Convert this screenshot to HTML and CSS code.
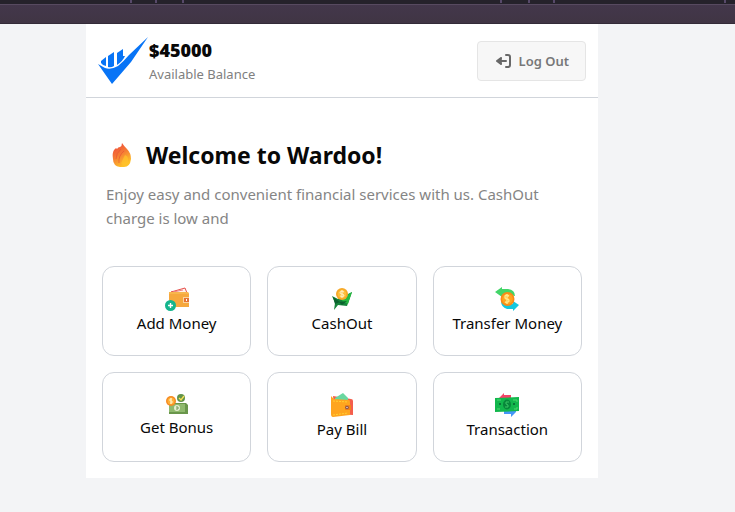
FILE: index.html
```html
<!DOCTYPE html>
<html lang="en">
<head>
<meta charset="utf-8">
<meta name="viewport" content="width=device-width, initial-scale=1">
<title>Wardoo</title>
<link rel="stylesheet" href="styles.css">
</head>
<body>
<div class="topbar" aria-hidden="true">
  <svg class="ticks" width="735" height="4"><path d="M130 0h2v3h-2zM155 0h2v3h-2zM182 0h2v3h-2zM500 0h2v3h-2zM528 0h2v3h-2zM553 0h2v3h-2zM724 0h2v3h-2z" fill="#57496a"/></svg>
</div>
<main class="panel">
  <header class="header">
    <div class="account">
      <svg class="logo" viewBox="0 0 51 48" aria-hidden="true">
        <g fill="#0874f6">
          <path d="M0 27L7 31Q13 33 20 29Q26 24 31 18L50 0L33 25L14 47Z"/>
          <path d="M3 26V24L8 20V29Q5 29 3 26ZM10 30V19L16 15V29Q13 31 10 30ZM19 28V16L25 12V19L27 19Q25 24 19 28Z"/>
        </g>
      </svg>
      <div>
        <div class="amount">$45000</div>
        <div class="caption">Available Balance</div>
      </div>
    </div>
    <button class="logout" type="button">
      <svg width="16" height="14" viewBox="0 0 16 14" fill="none" stroke="#686868" stroke-width="2" stroke-linejoin="round" stroke-linecap="round" aria-hidden="true"><path d="M10 1H12Q14 1 14 3V11Q14 13 12 13H10M10 7H2M5 4L1 7L5 10"/><path d="M5 4L1 7L5 10Z" fill="#686868" stroke-width="1"/></svg>
      Log Out
    </button>
  </header>
  <section class="welcome">
    <h1>
      <svg class="fire" viewBox="0 0 20 24" aria-hidden="true">
        <defs><linearGradient id="flame" x1="0" y1="0" x2=".5" y2="1"><stop stop-color="#ee3f3d"/><stop offset=".5" stop-color="#f47735"/><stop offset="1" stop-color="#ffc229"/></linearGradient></defs>
        <path d="M10 0Q12 3 15 6Q19 10 19 16Q18 24 12 24H8Q1 23 1 16Q0 10 2 7L4 5L5 6Q6 4 8 4Q10 3 10 0Z" fill="url(#flame)"/>
        <path d="M9 6Q4 10 4 16M12 8Q6 13 7 20" fill="none" stroke="#e85335" stroke-width=".7"/>
        <path d="M13 12Q11 16 10 18Q8 22 12 22Q17 21 16 16Q16 13 13 12Z" fill="#ffc52c" opacity=".7"/>
      </svg>
      Welcome to Wardoo!
    </h1>
    <p>Enjoy easy and convenient financial services with us. CashOut charge is low and</p>
  </section>
  <nav class="actions" aria-label="Services">
    <button class="action" type="button">
      <svg width="24" height="24" viewBox="0 0 24 24" aria-hidden="true"><path d="M6 5L20 1L22 6Z" fill="#fff2ed" stroke="#e6504c"/><path d="M8 5L18 3" stroke="#ef8681"/><path d="M4 5H22Q24 5 24 7V20H4Z" fill="#f6a83d"/><path d="M4 5H23V7H4Z" fill="#f8b64d"/><path d="M18 10H24V16H18Z" fill="#fbd3a0"/><path d="M19 11H24V15H19Z" fill="#e57232"/><path d="M21 12H22V14H21Z" fill="#fff"/><circle cx="5.5" cy="18.5" r="5.5" fill="#14b58d"/><path d="M5.5 16V21M3 18.5H8" stroke="#fff" stroke-width="1.4"/></svg>
      Add Money
    </button>
    <button class="action" type="button">
      <svg width="24" height="24" viewBox="0 0 24 24" aria-hidden="true"><path d="M2 9L8 12L22 5L17 19L8 18L4 23L5 16Z" fill="#16843b"/><path d="M14 10L22 5L18 17L12 14Z" fill="#26b941"/><path d="M3 10L10 15L5 17ZM9 15L17 14L12 18Z" fill="#0b632e"/><circle cx="12" cy="7" r="6" fill="#f7a928"/><circle cx="12" cy="7" r="4.3" fill="#ffbf3b"/><path d="M14 5Q10 3 10 6Q10 7 12 7Q14 7 14 9Q13 10 10 9M12 3V11" fill="none" stroke="#fff2ca"/></svg>
      CashOut
    </button>
    <button class="action" type="button">
      <svg width="24" height="24" viewBox="0 0 24 24" aria-hidden="true"><path d="M0 5L7 0V2H13Q20 3 20 9L14 8Q12 7 7 8V10Z" fill="#42d568"/><path d="M24 18L18 24V22H12Q6 20 6 14L12 17H18V14Z" fill="#15c8de"/><circle cx="12.5" cy="12" r="7" fill="#f98a18"/><circle cx="12.5" cy="12" r="5.3" fill="#ffa51f"/><path d="M14 9Q10 7 10 10Q10 12 12 12Q14 12 14 14Q13 16 10 15M12 7V17" fill="none" stroke="#ffe788" stroke-width="1.4"/></svg>
      Transfer Money
    </button>
    <button class="action" type="button">
      <svg width="24" height="22" viewBox="0 0 24 22" aria-hidden="true"><path d="M4 10H21L23 12V21H4Z" fill="#69964b"/><path d="M4 11H20V19H4Z" fill="#8fb96e"/><circle cx="12" cy="15" r="3" fill="#e5efd2"/><path d="M11 14H13V16H11" fill="none" stroke="#719956"/><circle cx="6" cy="8" r="5" fill="#f68a21"/><circle cx="6" cy="8" r="3.5" fill="#ffb038"/><path d="M7 6H5V8H7V10H5M6 5V11" fill="none" stroke="#fff0bf"/><circle cx="16" cy="5" r="4" fill="#61934a"/><path d="M14 5L16 7L19 3" fill="none" stroke="#f7df56" stroke-width="1.4"/></svg>
      Get Bonus
    </button>
    <button class="action" type="button">
      <svg width="24" height="24" viewBox="0 0 24 24" aria-hidden="true"><path d="M3 3L21 6Q23 6 23 8V22L5 21Z" fill="#f45e4c"/><path d="M5 5L13 0L18 5V8H5Z" fill="#69d7a0"/><path d="M1 3L4 6L19 7Q20 7 20 9V22L3 24Q1 24 1 21Z" fill="#ffa51f"/><path d="M3 8L18 9M3 22L18 20" stroke="#ffd133" stroke-dasharray="2 1"/><path d="M15 12H21V17H15Z" fill="#f18518"/><circle cx="17" cy="14.5" r="1.8" fill="#884f4a"/><circle cx="17" cy="14.5" r=".8" fill="#e9d7c8"/></svg>
      Pay Bill
    </button>
    <button class="action" type="button">
      <svg width="24" height="24" viewBox="0 0 24 24" aria-hidden="true"><path d="M4 5L9 0V2H16V7H4Z" fill="#f54468"/><path d="M21 19L16 24V21H9V17H21Z" fill="#4497f8"/><path d="M0 5L24 4V18L0 19Z" fill="#12b74c"/><path d="M2 7H6M2 16H5M18 7H22V9M19 16H22V14" stroke="#4fd970" fill="none"/><ellipse cx="12" cy="11.5" rx="4" ry="5" fill="#08873b"/><path d="M14 9H11V11L13 12V14H10" fill="none" stroke="#38c765"/><path d="M4 11H6M18 11H20" stroke="#087737" stroke-width="2"/></svg>
      Transaction
    </button>
  </nav>
</main>
</body>
</html>
```
FILE: styles.css
```css
* { box-sizing: border-box; }
body {
  margin: 0;
  min-height: 100vh;
  background: #f3f4f6;
  color: #080808;
  font-family: "Segoe UI", "Noto Sans", sans-serif;
  font-size: 15px;
  line-height: 24px;
}
button { font: inherit; color: inherit; cursor: pointer; }
svg { display: block; flex-shrink: 0; }
.topbar {
  height: 24px;
  overflow: hidden;
  background: linear-gradient(#25222b 0 4px, #574a60 4px 5px, #43374b 5px, #403544 23px, #332b38 23px);
}
.panel { max-width: 512px; margin-left: 86px; background: #fff; }
.header {
  display: flex;
  align-items: center;
  justify-content: space-between;
  padding: 12px;
  border-bottom: 1px solid #d1d5db;
}
.account { display: flex; align-items: center; }
.logo { width: 51px; height: 48px; }
.amount { font-size: 18px; font-weight: 900; line-height: 28px; }
.caption { color: #808080; font-size: 13px; line-height: 21px; }
.logout {
  display: flex;
  align-items: center;
  gap: 7px;
  height: 40px;
  padding: 0 16px 0 18px;
  border: 1px solid #e5e5e5;
  border-radius: 4px;
  background: #f7f7f7;
  color: #777;
  font-size: 13px;
  font-weight: 600;
}
.welcome { padding: 39px 20px 36px; }
h1 {
  display: flex;
  align-items: center;
  gap: 14px;
  margin: 0 0 9px 6px;
  font-size: 23px;
  font-weight: 700;
  line-height: 36px;
}
.fire { width: 20px; height: 24px; }
.welcome p { margin: 0; color: #858585; }
.actions {
  display: grid;
  grid-template-columns: repeat(3, 1fr);
  gap: 16px;
  padding: 0 16px 16px;
}
.action {
  display: flex;
  flex-direction: column;
  align-items: center;
  min-height: 90px;
  padding: 20px 4px;
  border: 1px solid #d1d5db;
  border-radius: 12px;
  background: #fff;
}
```
